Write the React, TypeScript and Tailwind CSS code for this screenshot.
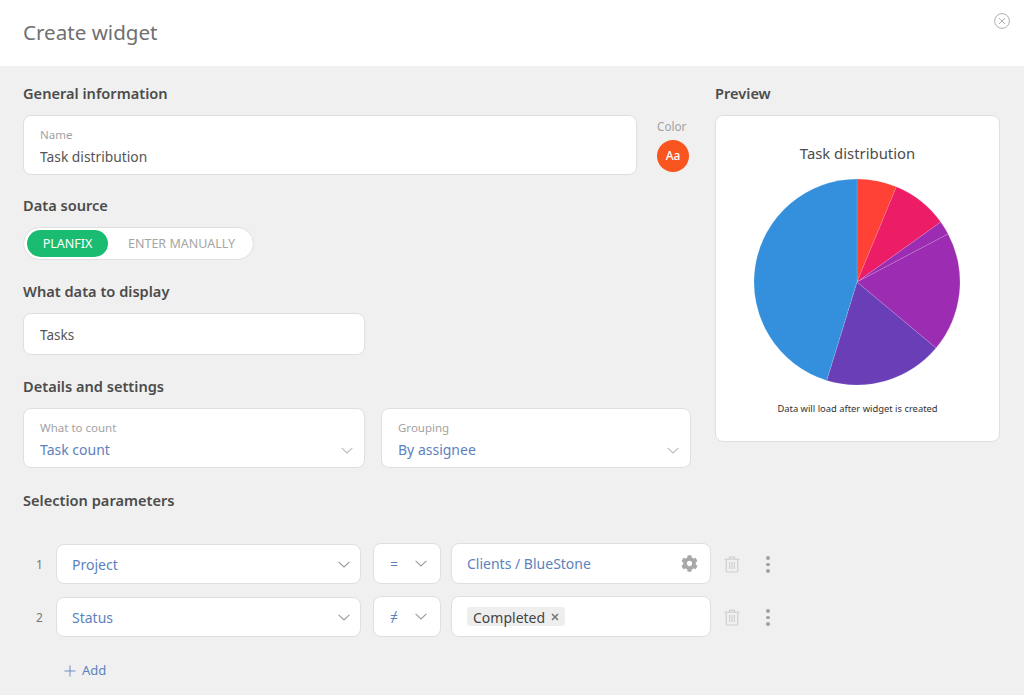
import { FaCog } from "react-icons/fa"

const font = "font-['Noto_Sans','Open_Sans',sans-serif]"

function polar(deg: number, r: number) {
  const a = (deg * Math.PI) / 180
  return [r * Math.sin(a), -r * Math.cos(a)]
}

const slices = [
  { from: 0, to: 22.5, color: "#ff4136" },
  { from: 22.5, to: 54.4, color: "#ec1c66" },
  { from: 54.4, to: 62.2, color: "#9c2cb1" },
  { from: 62.2, to: 129.9, color: "#9c2cb1" },
  { from: 129.9, to: 197.1, color: "#6a3eb6" },
  { from: 197.1, to: 360, color: "#3490dc" },
]

function Pie() {
  const r = 103
  return (
    <svg width="208" height="208" viewBox="-104 -104 208 208">
      {slices.map((s) => {
        const [x1, y1] = polar(s.from, r)
        const [x2, y2] = polar(s.to, r)
        const large = s.to - s.from > 180 ? 1 : 0
        return (
          <path
            key={s.from}
            d={`M0 0L${x1} ${y1}A${r} ${r} 0 ${large} 1 ${x2} ${y2}Z`}
            fill={s.color}
            stroke="#ffffff"
            strokeOpacity="0.25"
            strokeWidth="0.5"
          />
        )
      })}
    </svg>
  )
}

function Chevron({ className = "text-[#9a9a9a]" }: { className?: string }) {
  return (
    <svg width="12" height="7" viewBox="0 0 12 7" fill="none" className={className}>
      <path d="M0.6 0.8L6 6L11.4 0.8" stroke="currentColor" strokeWidth="1.1" />
    </svg>
  )
}

function Trash() {
  return (
    <svg width="16" height="17" viewBox="0 0 16 17" fill="none" stroke="#cfcfcf" strokeWidth="1.2">
      <path d="M0.5 3.2H15.5" />
      <path d="M5.5 3V1.2H10.5V3" />
      <path d="M2.2 3.4V14.4C2.2 15.3 2.9 16 3.8 16H12.2C13.1 16 13.8 15.3 13.8 14.4V3.4" />
      <path d="M5.6 6V13M8 6V13M10.4 6V13" />
    </svg>
  )
}

function Dots() {
  return (
    <div className="flex flex-col gap-[3px]">
      <span className="size-[3.5px] rounded-full bg-[#a0a0a0]" />
      <span className="size-[3.5px] rounded-full bg-[#a0a0a0]" />
      <span className="size-[3.5px] rounded-full bg-[#a0a0a0]" />
    </div>
  )
}

function Heading({ children }: { children: React.ReactNode }) {
  return <h2 className="text-[14.6px] leading-[22px] font-semibold text-[#4c4c4c]">{children}</h2>
}

const box = "bg-white border border-[#dfdfdf] rounded-lg"

function SelectCard({ label, value, width }: { label: string; value: string; width: string }) {
  return (
    <div className={`${box} ${width} h-[60px] pl-4 pr-[11px] pt-[11px] relative`}>
      <div className="text-[11.5px] leading-[16px] text-[#a2a2a2]">{label}</div>
      <div className="text-sm leading-[22px] mt-[3px] text-[#5c82bd]">{value}</div>
      <div className="absolute right-[11px] top-[38px]">
        <Chevron className="text-[#bcbcbc]" />
      </div>
    </div>
  )
}

function ConditionRow({
  num,
  field,
  op,
  children,
}: {
  num: number
  field: string
  op: string
  children: React.ReactNode
}) {
  return (
    <div className="flex items-center">
      <span className="w-[33px] pl-[13px] pt-px text-xs text-[#777]">{num}</span>
      <div className={`${box} w-[305px] h-10 pl-[15px] pr-[10px] flex items-center justify-between text-sm text-[#5c82bd]`}>
        <span className="pt-px">{field}</span>
        <Chevron />
      </div>
      <div className={`${box} w-[68px] h-[41px] -mt-px ml-3 pl-4 pr-[13px] flex items-center justify-between text-sm text-[#5c82bd]`}>
        <span className="pt-px">{op}</span>
        <Chevron />
      </div>
      <div className={`${box} w-[260px] h-[41px] -mt-px ml-[10px] pl-[15px] pr-[12px] flex items-center justify-between text-sm text-[#5c82bd]`}>
        {children}
      </div>
      <div className="ml-[13px] w-4 pt-px flex justify-center">
        <Trash />
      </div>
      <div className="ml-[26px] w-[4px] pt-px flex justify-center">
        <Dots />
      </div>
    </div>
  )
}

export default function App() {
  return (
    <div className={`${font} w-[1024px] h-[695px] overflow-hidden bg-[#f0f0f0] relative`}>
      <header className="h-[66px] bg-white flex items-center pl-[23px] pb-[2px]">
        <h1 className="text-[20.6px] text-[#707070]">Create widget</h1>
      </header>
      <button className="absolute top-[13px] right-[14px]">
        <svg width="16" height="16" viewBox="0 0 16 16" fill="none" stroke="#b0b0b0" strokeWidth="1">
          <circle cx="8" cy="8" r="7.4" />
          <path d="M5 5L11 11M11 5L5 11" />
        </svg>
      </button>

      <main className="px-[23px] pt-4">
        <div className="flex items-start">
          <div className="w-[668px]">
            <Heading>General information</Heading>
            <div className="flex mt-[11px]">
              <div className={`${box} w-[614px] h-[60px] pl-4 pt-[11px]`}>
                <div className="text-[11.5px] leading-[16px] text-[#a2a2a2]">Name</div>
                <div className="text-[13.8px] leading-[22px] mt-[3px] text-[#555]">Task distribution</div>
              </div>
              <div className="ml-5">
                <div className="text-[11.7px] leading-[16px] text-[#a2a2a2] mt-[3px]">Color</div>
                <div className="size-8 mt-[6px] rounded-full bg-[#f9561f] flex items-center justify-center text-xs font-medium text-white">
                  Aa
                </div>
              </div>
            </div>

            <div className="mt-[19px]">
              <Heading>Data source</Heading>
            </div>
            <div className="mt-[11px] w-[231px] h-[33px] rounded-full bg-white border border-[#dfdfdf] flex items-center pl-[3px]">
              <span className="w-[81px] h-[27px] pt-[2px] rounded-full bg-[#1abc72] text-white text-[12.5px] flex items-center justify-center">
                PLANFIX
              </span>
              <span className="ml-5 pt-[2px] text-[12.5px] text-[#a5a5a5]">ENTER MANUALLY</span>
            </div>

            <div className="mt-5">
              <Heading>What data to display</Heading>
            </div>
            <div className={`${box} mt-[11px] w-[342px] h-[42px] pl-4 pt-[2px] flex items-center text-[13.5px] text-[#555]`}>Tasks</div>

            <div className="mt-5">
              <Heading>Details and settings</Heading>
            </div>
            <div className="flex gap-4 mt-[11px]">
              <SelectCard label="What to count" value="Task count" width="w-[342px]" />
              <SelectCard label="Grouping" value="By assignee" width="w-[310px]" />
            </div>
          </div>

          <div className="ml-6 w-[285px]">
            <Heading>Preview</Heading>
            <div className={`${box} mt-[11px] h-[327px] flex flex-col items-center pt-[25px]`}>
              <div className="text-[14.85px] leading-[24px] text-[#4c4c4c]">Task distribution</div>
              <div className="mt-[13px] mr-[2px]">
                <Pie />
              </div>
              <div className="mt-4 text-[9.4px] leading-[14px] text-[#333]">Data will load after widget is created</div>
            </div>
          </div>
        </div>

        <div className="mt-[21px]">
          <Heading>Selection parameters</Heading>
        </div>

        <div className="mt-[33px] flex flex-col gap-[13px]">
          <ConditionRow num={1} field="Project" op="=">
            <span className="pt-px">Clients / BlueStone</span>
            <FaCog className="size-[17px] text-[#a8a8a8]" />
          </ConditionRow>
          <ConditionRow num={2} field="Status" op="≠">
            <span className="h-[19px] pl-[6px] pr-[6px] rounded-[3px] bg-[#eeeeee] flex items-center gap-[6px] text-[#444]">
              <span className="pt-[2px]">Completed</span>
              <svg width="8" height="8" viewBox="0 0 8 8" stroke="#777" strokeWidth="1.6">
                <path d="M1 1L7 7M7 1L1 7" />
              </svg>
            </span>
          </ConditionRow>
        </div>

        <div className="mt-6 ml-[41px] flex items-center gap-[6px] text-[13px] text-[#5c82bd]">
          <svg width="12" height="12" viewBox="0 0 12 12" stroke="#6f8fc2" strokeWidth="1">
            <path d="M6 0.5V11.5M0.5 6H11.5" />
          </svg>
          Add
        </div>
      </main>
    </div>
  )
}
